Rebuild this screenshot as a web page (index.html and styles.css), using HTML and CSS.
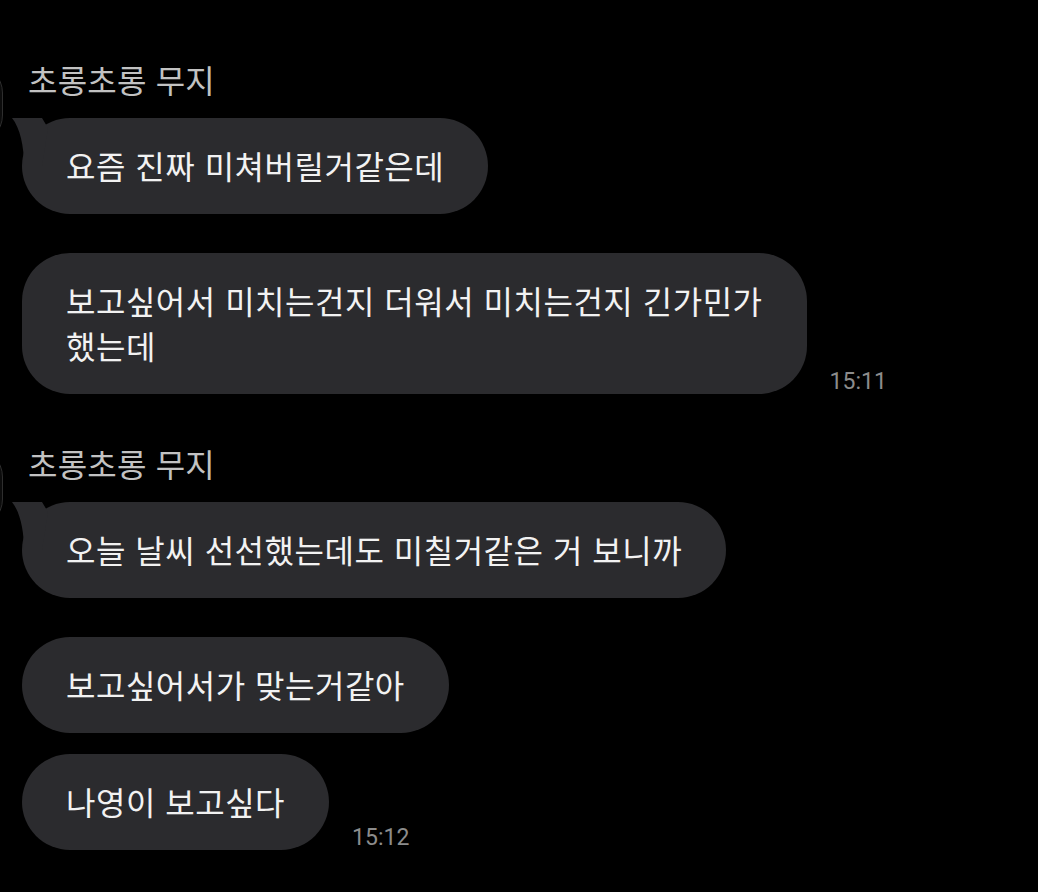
FILE: index.html
```html
<!DOCTYPE html>
<html lang="ko">
<head>
    <meta charset="UTF-8">
    <meta name="viewport" content="width=device-width, initial-scale=1.0">
    <title>chat</title>

    <!-- styling -->
    <link rel="stylesheet" href="styles.css">
</head>
<body>
    <div class="chat">

        <div class="group group-first">
            <div class="avatar"></div>
            <p class="sender">초롱초롱 무지</p>

            <div class="row">
                <div class="bubble has-tail">
                    <svg class="tail" width="50" height="50" viewBox="0 0 50 50"><path d="M2 0 H32 L38 10 L32 48 H14 C14 28 10 10 2 0 Z"/></svg>
                    요즘 진짜 미쳐버릴거같은데
                </div>
            </div>

            <div class="row row-gap-lg">
                <div class="bubble">보고싶어서 미치는건지 더워서 미치는건지 긴가민가<br>했는데</div>
                <span class="time">15:11</span>
            </div>
        </div>

        <div class="group group-second">
            <div class="avatar"></div>
            <p class="sender">초롱초롱 무지</p>

            <div class="row">
                <div class="bubble has-tail">
                    <svg class="tail" width="50" height="50" viewBox="0 0 50 50"><path d="M2 0 H32 L38 10 L32 48 H14 C14 28 10 10 2 0 Z"/></svg>
                    오늘 날씨 선선했는데도 미칠거같은 거 보니까
                </div>
            </div>

            <div class="row row-gap-lg">
                <div class="bubble">보고싶어서가 맞는거같아</div>
            </div>

            <div class="row row-gap-sm">
                <div class="bubble">나영이 보고싶다</div>
                <span class="time">15:12</span>
            </div>
        </div>

    </div>
</body>
</html>
```

FILE: styles.css
```css
body {
    margin: 0;
    background-color: #000000;
    font-family: "Noto Sans CJK KR", "Noto Sans", sans-serif;
    width: 1038px;
    height: 892px;
    overflow: hidden;
}

.chat {
    padding-left: 22px;
}

.group {
    position: relative;
}

.group-first {
    padding-top: 57px;
}

.group-second {
    padding-top: 47px;
}

/* profile picture, almost fully cut off by the left edge */
.avatar {
    position: absolute;
    left: -101px;
    width: 80px;
    height: 80px;
    border-radius: 30px;
    background-color: #0c0c0c;
    border: 1px solid #2e2e2e;
}

.group-first .avatar {
    top: 63px;
}

.group-second .avatar {
    top: 53px;
}

.sender {
    margin: 0 0 16px 6px;
    font-size: 32px;
    line-height: 45px;
    letter-spacing: 0.2px;
    color: #c2c2c2;
}

.row {
    display: flex;
    align-items: flex-end;
    gap: 23px;
}

.row-gap-lg {
    margin-top: 39px;
}

.row-gap-sm {
    margin-top: 21px;
}

.bubble {
    position: relative;
    background-color: #2b2b2e;
    color: #f2f2f2;
    font-size: 32px;
    letter-spacing: 0.5px;
    line-height: 45px;
    padding: 25px 44px 26px 44px;
    border-radius: 48px;
}

.tail {
    position: absolute;
    left: -12px;
    top: 0;
    fill: #2b2b2e;
}

.time {
    font-family: Roboto, "Noto Sans", sans-serif;
    font-size: 23px;
    line-height: 30px;
    color: #8c8c8c;
    margin-bottom: -3px;
}
```
